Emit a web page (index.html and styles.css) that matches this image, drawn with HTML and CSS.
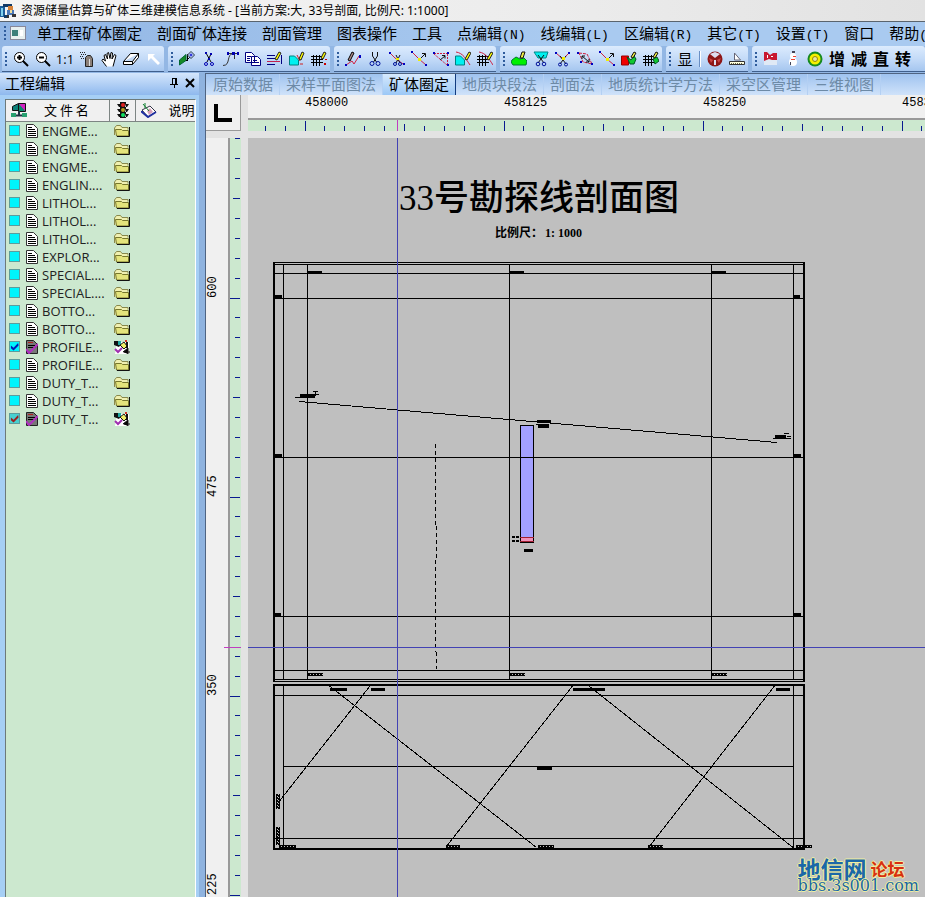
FILE: index.html
```html
<!DOCTYPE html>
<html lang="zh-CN">
<head>
<meta charset="utf-8">
<title>资源储量估算与矿体三维建模信息系统</title>
<link rel="stylesheet" href="styles.css">
</head>
<body>
<svg class="defs" aria-hidden="true">
  <defs>
    <symbol id="app" viewBox="0 0 16 16"><path fill="#1c5f9c" d="M0 3h5v11H0z"/><path fill="#7fd0ee" d="M1 5h2v8H1z"/><path fill="#123a66" d="M3 1h9v3H3zM4 12h3v3H4z"/><path fill="#d8843a" d="M8 3h5v4H8z"/><path fill="#4a78b8" d="M7 7h7v5H7z"/><path fill="#333" d="M7 12h2v3H7zM12 11h4v3h-4z"/><path fill="#eedd99" d="M10 7h2v3h-2z"/></symbol>
    <symbol id="zoomin" viewBox="0 0 16 16"><circle cx="6.500" cy="6.500" r="5" fill="#fff" stroke="#000"/><path d="M4 6.500h5M6.500 4v5" stroke="#000" stroke-width="2"/><path d="M10 10l5 5" stroke="#000" stroke-width="2"/></symbol>
    <symbol id="zoomout" viewBox="0 0 16 16"><circle cx="6.500" cy="6.500" r="5" fill="#fff" stroke="#000"/><path d="M4 6.500h5" stroke="#000" stroke-width="2"/><path d="M10 10l5 5" stroke="#000" stroke-width="2"/></symbol>
    <symbol id="spray" viewBox="0 0 16 16"><path fill="#8a7f78" stroke="#222" d="M6.500 6.500l2-2h3l2 3v8h-7z"/><path stroke="#222" stroke-dasharray="1 1" d="M1 1.500h6M2 3.500h5M1 5.500h4M2 7.500h3"/><path stroke="#ddd" d="M10.500 8v7"/></symbol>
    <symbol id="hand" viewBox="0 0 16 16"><path fill="#fff" stroke="#000" d="M5.500 15.500L1 9.500l1-1.500 2.500 2L3 4.500 4.500 3.500 6.500 8 6 2.500 7.500 1.500 9 7.500l1-6 1.500.5L11 8l2.500-4.500 1.500 1-3 11"/></symbol>
    <symbol id="eraser" viewBox="0 0 16 16"><path fill="#fff" stroke="#000" d="M.500 10.500l7-8h8l-6 8zM.500 10.500v3h9l6-7v-4M9.500 10.500v3"/></symbol>
    <symbol id="cursor" viewBox="0 0 16 16"><path fill="#fff" d="M3 3h7L8 5l7 7-2 2-7-7-3 3z"/></symbol>
    <symbol id="greenpen" viewBox="0 0 16 16"><path fill="#168a26" stroke="#063" d="M.500 14V9L7 3.500v6z"/><path stroke="#000" d="M7 10l4-4M8.500 3v7"/><path fill="#cfe6ff" stroke="#234" d="M12 .500l3.500 3.500L12 7.500 8.500 4z"/><path stroke="#00c" d="M10.500 4h3M12 2.500v3"/></symbol>
    <symbol id="cutnode" viewBox="0 0 16 16"><path stroke="#000" fill="none" d="M5 2l5 9M10 3L6 11"/><path fill="#0000b0" d="M4 1h2v2H4zM9 2h2v2H9zM7 7h2v2H7z"/><g fill="none" stroke="#0000b0"><circle cx="5" cy="13" r="1.500"/><circle cx="11" cy="13" r="1.500"/></g></symbol>
    <symbol id="nodes" viewBox="0 0 16 16"><path fill="none" stroke="#333" d="M0 14.500c8 0 3-11 10-12M4 2.500h11M11.500 3v5"/><path fill="#0000b0" d="M4 1h2v3H4zM14 1h2v3h-2zM9 1h3v3H9z"/></symbol>
    <symbol id="copy" viewBox="0 0 16 16"><path fill="#fff" stroke="#000080" d="M.500 1.500h6l3 3v7h-9zM6.500 5.500h6l3 3v6h-9z"/><path stroke="#000080" d="M2 5.500h4M2 7.500h3M2 9.500h3M8 9.500h4M8 11.500h6"/></symbol>
    <symbol id="textedit" viewBox="0 0 16 16"><path stroke="#000080" d="M0 4.500h8M0 7.500h8"/><path stroke="#c02050" d="M0 10.500h13"/><path stroke="#000080" d="M0 13.500h8"/><path fill="#ff0" stroke="#222" d="M8 8l4-7 2 1-4 7z"/><path stroke="#000080" d="M14.500 4v9"/></symbol>
    <symbol id="cyanpen" viewBox="0 0 16 16"><path fill="#00f0f0" stroke="#008080" d="M.500 14V5h5l4 4v5z"/><path stroke="#d02020" d="M8 4l3 6M11 13h3"/><path fill="#ff0" stroke="#222" d="M10 8l3-7 2 1-3 7z"/></symbol>
    <symbol id="grid" viewBox="0 0 16 16"><path stroke="#000" d="M0 5.500h12M0 8.500h12M0 11.500h12M2.500 4v11M5.500 4v11M8.500 4v11"/><path fill="#ff0" stroke="#222" d="M10 7l3-6 2 1-3 6z"/><path fill="#c00" d="M13 12h2v2h-2zM14 8h2v1h-2z"/></symbol>
    <symbol id="drawcurve" viewBox="0 0 16 16"><path fill="none" stroke="#d02040" d="M1 14l6-4 2 3 5-8"/><path fill="#a88" stroke="#000" d="M3 9L7 1l2 1-4 8z"/><path fill="#0000c0" d="M0 13h2v2H0zM14 4h2v3h-2z"/></symbol>
    <symbol id="scissors" viewBox="0 0 16 16"><path stroke="#111" d="M5.500 1v4l4 6M10.500 1v4l-4 6" fill="none"/><g fill="none" stroke="#00109a"><circle cx="5" cy="12.500" r="2"/><circle cx="11" cy="12.500" r="2"/></g></symbol>
    <symbol id="cutline" viewBox="0 0 16 16"><path fill="none" stroke="#d02040" d="M1 2l5 5 8 6"/><path fill="none" stroke="#111" d="M7 4l4 8M11 4l-4 8"/><path fill="#ee0" d="M7 7h3v2H7z"/><g fill="none" stroke="#00109a"><circle cx="6" cy="13" r="1.500"/><circle cx="11" cy="13" r="1.500"/></g><path fill="#0000c0" d="M0 1h2v2H0zM14 12h2v2h-2z"/></symbol>
    <symbol id="moveline" viewBox="0 0 16 16"><path fill="none" stroke="#d02040" d="M1 1l7 7 7 6"/><path stroke="#111" fill="none" d="M9 8l5-5M11 2.500h3.500V6"/><path fill="#ee0" d="M7 7h3v3H7z"/><path fill="#0000c0" d="M0 0h2v2H0zM14 13h2v2h-2z"/></symbol>
    <symbol id="dashline" viewBox="0 0 16 16"><path fill="none" stroke="#d02040" stroke-dasharray="2 1" d="M1 2.500h13M14.500 3v11M1 3l13 11"/><path stroke="#111" fill="none" d="M7 9l5-4M9 4.500h3v3"/><path fill="#0000c0" d="M0 1h2v2H0zM14 1h2v2h-2zM14 13h2v2h-2z"/></symbol>
    <symbol id="cyanred" viewBox="0 0 16 16"><path fill="#00f0f0" stroke="#008080" d="M.500 14V5h5l4 4v5z"/><path fill="none" stroke="#d02040" d="M1 1c7 1 10 7 14 13"/><path fill="#ff0" stroke="#222" d="M10 8l4-7 2 1-4 7z"/></symbol>
    <symbol id="gridred" viewBox="0 0 16 16"><path stroke="#000" d="M0 5.500h12M0 8.500h12M0 11.500h12M2.500 4v11M5.500 4v11M8.500 4v11"/><path fill="none" stroke="#d02040" d="M2 1c7 1 10 7 14 13"/><path fill="#ff0" stroke="#222" d="M10 8l4-7 2 1-4 7z"/></symbol>
    <symbol id="blob" viewBox="0 0 16 16"><path fill="#00f000" stroke="#073" d="M2 14l-2-3 1-2 4-3 4 2 4-1 3 3-1 4z"/><path fill="#ee4" stroke="#111" d="M9 7l2-6h3l-2 6z"/></symbol>
    <symbol id="cyancut" viewBox="0 0 16 16"><path fill="#00f0f0" stroke="#088" d="M1 1h14l-2 6H5z"/><path fill="none" stroke="#111" d="M5 4l6 8M11 4l-6 8"/><g fill="none" stroke="#00109a"><circle cx="5" cy="13" r="1.800"/><circle cx="11" cy="13" r="1.800"/></g></symbol>
    <symbol id="joincut" viewBox="0 0 16 16"><path fill="none" stroke="#d02040" d="M1 2l7 6 6-6"/><path fill="none" stroke="#111" d="M5 5l6 8M11 5l-6 8"/><path fill="#ee0" d="M7 6h3v3H7z"/><g fill="none" stroke="#00109a"><circle cx="5" cy="13.500" r="1.500"/><circle cx="11" cy="13.500" r="1.500"/></g><path fill="#0000c0" d="M0 1h2v2H0zM13 1h2v2h-2z"/></symbol>
    <symbol id="area" viewBox="0 0 16 16"><path fill="none" stroke="#d02040" stroke-dasharray="3 1" d="M2 2l8 1 5 10-9-2z"/><path fill="none" stroke="#111" d="M5 5l7 6M5 8V5h3M12 8v3H9"/><path fill="#0000c0" d="M0 1h2v2H0zM14 12h2v2h-2zM3 10h2v2H3z"/></symbol>
    <symbol id="redgreen" viewBox="0 0 16 16"><path fill="#f00000" stroke="#900" d="M.500 14V5h7v9z"/><path fill="#10c830" stroke="#052" d="M6 6l4 3 3-4 2 3-2 5H9z"/><path fill="#ee4" stroke="#111" d="M10 6l3-5 2 1-3 5z"/></symbol>
    <symbol id="gridgreen" viewBox="0 0 16 16"><path stroke="#000" d="M0 5.500h12M0 8.500h12M0 11.500h12M2.500 4v11M5.500 4v11M8.500 4v11"/><path fill="#10c830" stroke="#052" d="M10 8l4-2 2 4-4 3z"/><path fill="#ee4" stroke="#111" d="M10 6l3-5 2 1-3 5z"/></symbol>
    <symbol id="globe" viewBox="0 0 16 16"><circle cx="8" cy="8" r="7.500" fill="#8d1616"/><path fill="#dde" d="M3 3l5 4 5-4-5-2zM7 9h2v5H7z"/><path fill="#c44" d="M2 7l4 2-2 3zM14 7l-4 2 2 3z"/></symbol>
    <symbol id="setsquare" viewBox="0 0 16 16"><path fill="#fff" stroke="#667" d="M5.500 9V2l6 7z"/><path fill="#ffd" stroke="#333" d="M.500 10.500h15v3H.500z"/><path stroke="#664" d="M2 12.500h12" stroke-dasharray="1 1"/></symbol>
    <symbol id="flag" viewBox="0 0 16 16"><path fill="#dfe9f5" d="M1 8h13v6H1z"/><path fill="#c81830" d="M1 1h3l3 3 3-2h4v7H9L6 8 1 10z"/><path fill="#fff" d="M4 4h1v3H4zM8 5h2v1H8z"/></symbol>
    <symbol id="snowman" viewBox="0 0 16 16"><circle cx="8" cy="11" r="4" fill="#fff"/><circle cx="8" cy="5" r="3" fill="#fff"/><path fill="#445" d="M7 0h3v2H7zM5 11h1v3H5z"/><path fill="#e43" d="M8 5h3v1H8zM6 8h4v1H6z"/></symbol>
    <symbol id="target" viewBox="0 0 16 16"><circle cx="8" cy="8" r="7.500" fill="#158a20"/><circle cx="8" cy="8" r="5.500" fill="#f4f000"/><circle cx="8" cy="8" r="2.500" fill="#e8e8a0" stroke="#998a00"/></symbol>
    <symbol id="doc" viewBox="0 0 12 14"><path fill="#fff" stroke="#333" d="M.500.500h7l4 4v9H.500z"/><path stroke="#000" d="M2 3.500h4M2 5.500h7M2 7.500h8M2 9.500h8M2 11.500h8"/></symbol>
    <symbol id="docon" viewBox="0 0 12 14"><path fill="#777" stroke="#222" d="M.500.500h7l4 4v9H.500z"/><path stroke="#000" d="M2 5.500h7M2 7.500h8"/><path stroke="#b02020" d="M2 2.500h5"/><path fill="none" stroke="#b030c0" stroke-width="2" d="M0 9l3 4 9-9"/></symbol>
    <symbol id="folder" viewBox="0 0 16 14"><path fill="#f0f0b0" stroke="#88884c" d="M.500 11V4l2-2.500h4l1.500 2h6v2"/><path fill="#e4e47c" stroke="#77772c" d="M1.500 5.500h6l1 1h6v5.500h-12z"/><path fill="none" stroke="#111" d="M3 12.500h12.500V3"/></symbol>
    <symbol id="paint" viewBox="0 0 16 14"><path fill="#fff" d="M3 2h12v12H1z"/><path fill="#111" d="M0 1h4l3 3-2 3-5-2zM12 2h2v6h-2z"/><path fill="#20a8a0" d="M4 1h3v4H4z"/><path fill="#ee6" stroke="#111" d="M6 5l4-3 3 4-3 3z"/><path fill="none" stroke="#a030b0" stroke-width="2" d="M1 9l3 3 4-4"/><path stroke="#111" d="M9 12l5-4v6M10 12h6"/><path fill="#d03020" d="M11 0h2v2h-2z"/></symbol>
    <symbol id="tree" viewBox="0 0 16 16"><path fill="#0a7f78" stroke="#111" d="M1.500 4.500l6-3v7h-6z"/><path fill="#d020c0" stroke="#111" d="M7.500 1.500h7v8h-7z"/><path fill="#0a8a6a" d="M8 2l6 7H8z"/><path stroke="#234" d="M8 9v5M3 13.500h10" stroke-width="2"/><path fill="#28a070" d="M0 11h5v4H0zM11 11h5v4h-5z"/></symbol>
    <symbol id="light" viewBox="0 0 14 16"><path fill="#111" d="M4 0h6v16H4zM1 2h3l1 3H3zM1 7h3l1 3H3zM1 12h3l1 3H3zM13 2h-3L9 5h2zM13 7h-3l-1 3h2zM13 12h-3l-1 3h2z"/><circle cx="7" cy="3" r="2" fill="#e02020"/><circle cx="7" cy="8" r="2" fill="#b8a020"/><circle cx="7" cy="13" r="2" fill="#10e060"/></symbol>
    <symbol id="note" viewBox="0 0 16 16"><path fill="#fff" stroke="#334" d="M1 8l8-4 6 6-8 5z"/><path fill="#d8a0b8" d="M6 9l3-3 3 4-4 3z"/><path fill="none" stroke="#2030a0" stroke-width="2" d="M1 9v1l6 5 8-5"/><path fill="none" stroke="#108030" d="M2 2l6 7M4 1v5"/></symbol>
  </defs>
</svg>

<header class="titlebar"><svg class="i16"><use href="#app"/></svg><h1>资源储量估算与矿体三维建模信息系统 - [当前方案:大, 33号剖面, 比例尺: 1:1000]</h1></header>

<nav class="menubar" aria-label="主菜单">
  <span class="grip"></span>
  <svg class="docwin" viewBox="0 0 16 14"><rect x=".5" y=".5" width="15" height="13" fill="#e8f0f0" stroke="#889"/><rect x="2" y="4" width="6" height="6" fill="#3d7f7a"/><rect x="10" y="4" width="3" height="6" fill="#fff"/></svg>
  <button>单工程矿体圈定</button><button>剖面矿体连接</button><button>剖面管理</button><button>图表操作</button><button>工具</button><button>点编辑<span class="key">(N)</span></button><button>线编辑<span class="key">(L)</span></button><button>区编辑<span class="key">(R)</span></button><button>其它<span class="key">(T)</span></button><button>设置<span class="key">(T)</span></button><button>窗口</button><button>帮助<span class="key">(H)</span></button>
</nav>

<div class="toolbars">
  <div class="tools"><span class="grip"></span>
    <button aria-label="放大"><svg class="i16"><use href="#zoomin"/></svg></button><button aria-label="缩小"><svg class="i16"><use href="#zoomout"/></svg></button><button class="ratio">1:1</button><button aria-label="喷涂"><svg class="i16"><use href="#spray"/></svg></button><button aria-label="平移"><svg class="i16"><use href="#hand"/></svg></button><button aria-label="清除"><svg class="i16"><use href="#eraser"/></svg></button><button aria-label="选择"><svg class="i16"><use href="#cursor"/></svg></button>
  </div>
  <div class="tools"><span class="grip"></span>
    <button aria-label="加点"><svg class="i16"><use href="#greenpen"/></svg></button><button aria-label="剪点"><svg class="i16"><use href="#cutnode"/></svg></button><button aria-label="节点"><svg class="i16"><use href="#nodes"/></svg></button><button aria-label="复制"><svg class="i16"><use href="#copy"/></svg></button><button aria-label="改文字"><svg class="i16"><use href="#textedit"/></svg></button><button aria-label="改点参数"><svg class="i16"><use href="#cyanpen"/></svg></button><button aria-label="改点属性"><svg class="i16"><use href="#grid"/></svg></button>
  </div>
  <div class="tools"><span class="grip"></span>
    <button aria-label="画线"><svg class="i16"><use href="#drawcurve"/></svg></button><button aria-label="剪切"><svg class="i16"><use href="#scissors"/></svg></button><button aria-label="剪断线"><svg class="i16"><use href="#cutline"/></svg></button><button aria-label="移线点"><svg class="i16"><use href="#moveline"/></svg></button><button aria-label="移线"><svg class="i16"><use href="#dashline"/></svg></button><button aria-label="改线参数"><svg class="i16"><use href="#cyanred"/></svg></button><button aria-label="改线属性"><svg class="i16"><use href="#gridred"/></svg></button>
  </div>
  <div class="tools"><span class="grip"></span>
    <button aria-label="造区"><svg class="i16"><use href="#blob"/></svg></button><button aria-label="剪区"><svg class="i16"><use href="#cyancut"/></svg></button><button aria-label="剪弧"><svg class="i16"><use href="#joincut"/></svg></button><button aria-label="移区"><svg class="i16"><use href="#area"/></svg></button><button aria-label="移弧点"><svg class="i16"><use href="#moveline"/></svg></button><button aria-label="改区参数"><svg class="i16"><use href="#redgreen"/></svg></button><button aria-label="改区属性"><svg class="i16"><use href="#gridgreen"/></svg></button>
  </div>
  <div class="tools"><span class="grip"></span>
    <button class="word">显</button><span class="sep"></span><button aria-label="三维"><svg class="i16"><use href="#globe"/></svg></button><button aria-label="量算"><svg class="i16"><use href="#setsquare"/></svg></button>
  </div>
  <div class="tools last"><span class="grip"></span>
    <button aria-label="标记"><svg class="i16"><use href="#flag"/></svg></button><button aria-label="雪人"><svg class="i16"><use href="#snowman"/></svg></button><button aria-label="定位"><svg class="i16"><use href="#target"/></svg></button><button class="word strong">增</button><button class="word strong">减</button><button class="word strong">直</button><button class="word strong">转</button>
  </div>
</div>

<main class="work">
  <aside class="side">
    <div class="sidehead"><h2>工程编辑</h2>
      <button aria-label="固定"><svg class="i10" viewBox="0 0 10 10"><path d="M3 .500h5M3.500 0v6M6.500 0v6M7.500 0v6M1 6.500h8M5.500 6v4" stroke="#000" fill="none"/></svg></button>
      <button aria-label="关闭"><svg class="i10" viewBox="0 0 10 10"><path d="M1 1l8 8M9 1L1 9" stroke="#000" stroke-width="2"/></svg></button>
    </div>
    <div class="list">
      <table>
        <colgroup><col class="c-name"><col class="c-state"><col></colgroup>
        <thead><tr>
          <th><div class="cell"><svg class="i16"><use href="#tree"/></svg><span class="thname">文 件 名</span></div></th>
          <th><div class="cell"><svg class="i16"><use href="#light"/></svg></div></th>
          <th><div class="cell"><svg class="i16"><use href="#note"/></svg><span class="thdesc">说明</span></div></th>
        </tr></thead>
        <tbody>
          <tr><td><label><input type="checkbox"><svg class="doc"><use href="#doc"/></svg>ENGME...</label></td><td><svg class="folder"><use href="#folder"/></svg></td><td></td></tr>
          <tr><td><label><input type="checkbox"><svg class="doc"><use href="#doc"/></svg>ENGME...</label></td><td><svg class="folder"><use href="#folder"/></svg></td><td></td></tr>
          <tr><td><label><input type="checkbox"><svg class="doc"><use href="#doc"/></svg>ENGME...</label></td><td><svg class="folder"><use href="#folder"/></svg></td><td></td></tr>
          <tr><td><label><input type="checkbox"><svg class="doc"><use href="#doc"/></svg>ENGLIN....</label></td><td><svg class="folder"><use href="#folder"/></svg></td><td></td></tr>
          <tr><td><label><input type="checkbox"><svg class="doc"><use href="#doc"/></svg>LITHOL...</label></td><td><svg class="folder"><use href="#folder"/></svg></td><td></td></tr>
          <tr><td><label><input type="checkbox"><svg class="doc"><use href="#doc"/></svg>LITHOL...</label></td><td><svg class="folder"><use href="#folder"/></svg></td><td></td></tr>
          <tr><td><label><input type="checkbox"><svg class="doc"><use href="#doc"/></svg>LITHOL...</label></td><td><svg class="folder"><use href="#folder"/></svg></td><td></td></tr>
          <tr><td><label><input type="checkbox"><svg class="doc"><use href="#doc"/></svg>EXPLOR...</label></td><td><svg class="folder"><use href="#folder"/></svg></td><td></td></tr>
          <tr><td><label><input type="checkbox"><svg class="doc"><use href="#doc"/></svg>SPECIAL....</label></td><td><svg class="folder"><use href="#folder"/></svg></td><td></td></tr>
          <tr><td><label><input type="checkbox"><svg class="doc"><use href="#doc"/></svg>SPECIAL....</label></td><td><svg class="folder"><use href="#folder"/></svg></td><td></td></tr>
          <tr><td><label><input type="checkbox"><svg class="doc"><use href="#doc"/></svg>BOTTO...</label></td><td><svg class="folder"><use href="#folder"/></svg></td><td></td></tr>
          <tr><td><label><input type="checkbox"><svg class="doc"><use href="#doc"/></svg>BOTTO...</label></td><td><svg class="folder"><use href="#folder"/></svg></td><td></td></tr>
          <tr><td><label><input type="checkbox" checked><svg class="doc"><use href="#docon"/></svg>PROFILE...</label></td><td><svg class="folder"><use href="#paint"/></svg></td><td></td></tr>
          <tr><td><label><input type="checkbox"><svg class="doc"><use href="#doc"/></svg>PROFILE...</label></td><td><svg class="folder"><use href="#folder"/></svg></td><td></td></tr>
          <tr><td><label><input type="checkbox"><svg class="doc"><use href="#doc"/></svg>DUTY_T...</label></td><td><svg class="folder"><use href="#folder"/></svg></td><td></td></tr>
          <tr><td><label><input type="checkbox"><svg class="doc"><use href="#doc"/></svg>DUTY_T...</label></td><td><svg class="folder"><use href="#folder"/></svg></td><td></td></tr>
          <tr><td><label><input type="checkbox" class="active" checked><svg class="doc"><use href="#docon"/></svg>DUTY_T...</label></td><td><svg class="folder"><use href="#paint"/></svg></td><td></td></tr>
        </tbody>
      </table>
    </div>
  </aside>

  <section class="view">
    <div class="tabs" role="tablist">
      <button role="tab">原始数据</button><button role="tab">采样平面图法</button><button role="tab" class="on" aria-selected="true">矿体圈定</button><button role="tab">地质块段法</button><button role="tab">剖面法</button><button role="tab">地质统计学方法</button><button role="tab">采空区管理</button><button role="tab">三维视图</button>
    </div>
    <div class="sheet">
      <div class="corner"><svg viewBox="0 0 34 36"><path fill="none" stroke="#000" stroke-width="4" d="M10 9v16h16"/></svg></div>
      <svg class="hruler" id="hruler"></svg>
      <svg class="vruler" id="vruler"></svg>
      <div class="canvas">
        <svg class="drawing">
          <g transform="translate(-248 -138)">
            <text class="dtitle" x="399" y="210">33号勘探线剖面图</text>
            <text class="dscale" x="495" y="237">比例尺：<tspan x="545">1:</tspan><tspan x="558">1000</tspan></text>
            <path class="fill-hole" d="M520 425h14v112h-14z"/>
            <path class="fill-ore" d="M520 537h14v6h-14z"/>
            <g class="thin">
              <path d="M273 262.500h532M273 264.500h532M273 273.500h532M273 298.500h532M273 457.500h532M273 616.500h532M273 670.500h532M273 679.500h532M273 681.500h532"/>
              <path d="M273 695.500h532M283 766.500h511M273 838.500h532"/>
              <path d="M283.500 264v416M307.500 264v416M509.500 264v416M711.500 264v416M793.500 264v416M283.500 685v164M793.500 685v164"/>
              <path d="M299 401.500L777 442.500M520.500 425.500h13v117h-13z"/>
              <path d="M329.500 686L536.500 847.500M370 686L279.500 801M572.500 686L447.500 845M589 686L793 847.500M774.500 686L650.500 845"/>
              <path stroke-dasharray="4 3" d="M435.500 444v82M436.500 526v34M435.500 560v92M436.500 652v17"/>
            </g>
            <path class="thick" d="M274 262v420M804 262v420M273 685h531v164H274V685"/>
            <path class="ore-line" d="M520 537.500h14M520 541.500h14"/>
            <path class="mark" d="M308 271h14v3h-14zM510 271h14v3h-14zM712 271h14v3h-14zM275 295h7v3h-7zM275 454h7v3h-7zM275 613h6v3h-6zM794 295h6v3h-6zM794 454h7v3h-7zM794 613h7v3h-7zM330 688h17v3h-17zM371 688h14v3h-14zM573 688h32v3h-32zM776 688h14v3h-14zM537 767h15v3h-15zM300 394h15v3h-15zM537 420h14v3h-14zM538 424h11v4h-11zM775 435h11v3h-11zM524 549h9v3h-9z"/>
            <g class="thin">
              <path d="M295 397.500h20M313 391.500h5M314 394.500h5M315.500 392v4M536 424.500h4M773 438.500h18M784 433.500h5M787 436.500h4"/>
              <path stroke-dasharray="3 1" d="M512 536.500h8M512 537.500h8M512 540.500h8M512 541.500h8"/>
              <path d="M308 673.500h15M308 675.500h15M510 673.500h15M510 675.500h15M712 673.500h15M712 675.500h15M279 845.500h17M279 847.500h17M446 845.500h14M446 847.500h14M538 845.500h16M538 847.500h16M648 845.500h15M648 847.500h15M796 845.500h16M796 847.500h16M276.500 794v15M279.500 794v15M276.500 827v18M279.500 827v18"/>
              <path stroke-dasharray="2 1" d="M308 674.500h15M510 674.500h15M712 674.500h15M279 846.500h17M446 846.500h14M538 846.500h16M648 846.500h15M796 846.500h16M277.500 794v15M278.500 795v14M277.500 827v18M278.500 828v17"/>
            </g>
            <path class="cross" d="M397.500 138v2000M248 647.500h3000"/>
          </g>
        </svg>
        <div class="stamp"><div class="names"><span class="site">地信网</span><span class="forum">论坛</span></div><div class="url">bbs.3s001.com</div></div>
      </div>
    </div>
  </section>
</main>
<script src="rulers.js"></script>
</body>
</html>
```
FILE: rulers.js
```js
const NS = 'http://www.w3.org/2000/svg';
const STEP = 19.9;

function add(parent, name, attrs, text) {
  const node = document.createElementNS(NS, name);
  for (const key in attrs) node.setAttribute(key, attrs[key]);
  if (text) node.textContent = text;
  parent.appendChild(node);
}

// Every tenth tick is long, every fifth is medium.
function ticks(origin, first, count, draw) {
  let d = '';
  for (let k = first; k < count; k++) {
    const pos = Math.floor(origin + k * STEP) + 0.5;
    const len = k % 10 === 0 ? 10 : k % 5 === 0 ? 7 : 5;
    d += draw(pos, len);
  }
  return d;
}

const h = document.getElementById('hruler');
add(h, 'path', { class: 'tick', d: ticks(57, -2, 120, (p, n) => `M${p} ${36 - n}v${n}`) });
add(h, 'path', { class: 'pos', d: 'M149.5 25v11' });
for (let i = 0; i < 12; i++) {
  add(h, 'text', { x: 57 + i * 199, y: 11 }, String(458000 + i * 125));
}

const v = document.getElementById('vruler');
add(v, 'path', { class: 'tick', d: ticks(160, -8, 90, (p, n) => `M${34 - n} ${p}h${n}`) });
add(v, 'path', { class: 'pos', d: 'M18 509.5h17' });
for (let i = 0; i < 5; i++) {
  const y = 160 + i * 199;
  add(v, 'text', { x: 10, y: y, transform: `rotate(-90 10 ${y})` }, String(600 - i * 125));
}
```
FILE: styles.css
```css
* { box-sizing: border-box; }

body {
  margin: 0;
  height: 100vh;
  display: flex;
  flex-direction: column;
  overflow: hidden;
  background: #94b8e4;
  color: #000;
  font: 15px/20px "Open Sans", "Noto Sans CJK SC", sans-serif;
}

button {
  margin: 0;
  padding: 0;
  border: 0;
  background: none;
  color: inherit;
  font: inherit;
  white-space: nowrap;
}

svg { display: block; flex: none; }
.defs { position: absolute; width: 0; height: 0; }
.i16 { width: 16px; height: 16px; }
.i10 { width: 10px; height: 10px; }

.titlebar {
  flex: none;
  display: flex;
  align-items: center;
  gap: 5px;
  height: 22px;
  border-bottom: 1px solid #5a646e;
  background: linear-gradient(90deg, #f4f4f4, #ececec 60%, #e2e2e2);
}
.titlebar h1 {
  margin: 0;
  font: 12px/20px "Noto Sans", "Noto Sans CJK SC", sans-serif;
  white-space: nowrap;
}

.menubar {
  flex: none;
  display: flex;
  align-items: center;
  gap: 15px;
  height: 24px;
  padding: 0 0 2px 4px;
  overflow: hidden;
  background: linear-gradient(90deg, #92b6e4, #a9caf0 60%);
  font-family: "Noto Sans CJK SC", sans-serif;
}
.menubar .grip { margin-right: -11px; }
.docwin { width: 16px; height: 14px; margin-right: -4px; }
.key { font: 13px "Liberation Mono", monospace; }

.grip {
  flex: none;
  width: 2px;
  height: 14px;
  background: repeating-linear-gradient(#2f5c9c 0 2px, transparent 2px 4px);
}

.toolbars {
  flex: none;
  display: flex;
  gap: 4px;
  height: 27px;
  padding-left: 2px;
  overflow: hidden;
  border-bottom: 1px solid #93b7e4;
  background: #93b7e4;
}
.tools {
  flex: none;
  display: flex;
  align-items: center;
  padding-left: 3px;
  border-bottom: 1px solid #3f5f8c;
  border-radius: 3px 3px 0 0;
  background: linear-gradient(#dcebfd, #c4dbf8 50%, #a5c6ef);
}
.tools .grip { margin-right: 3px; }
.tools button {
  width: 22px;
  height: 22px;
  display: flex;
  align-items: center;
  justify-content: center;
}
.tools .ratio { font-size: 13px; }
.tools .word { font-size: 15px; }
.tools .strong { font-size: 16px; font-weight: 700; }
.tools.last { flex: 1 0 auto; }
.sep { width: 1px; height: 16px; margin: 0 4px 0 3px; background: #6a8fc4; box-shadow: 1px 0 #fff; }

.work { flex: 1; display: flex; min-height: 0; }

.side {
  flex: none;
  width: 205px;
  display: flex;
  flex-direction: column;
  padding: 0 9px 0 5px;
  background: linear-gradient(90deg, #a6cff5 199px, #8fb3df 199px);
}
.sidehead {
  flex: none;
  display: flex;
  align-items: center;
  gap: 6px;
  height: 22px;
  margin: 0 -3px 4px -5px;
  padding: 0 4px 3px 5px;
  background: linear-gradient(#d4e6fc, #8fb9ee);
}
.sidehead h2 {
  flex: 1;
  margin: 0;
  font: 15px/18px "Noto Sans CJK SC", sans-serif;
}

.list {
  flex: 1;
  min-height: 0;
  border: solid #6d7a7a;
  border-width: 1px 0 0 1px;
  border-right: 1px solid #fff;
  background: #cce8cf;
  overflow: hidden;
}
table { width: 100%; table-layout: fixed; border-collapse: collapse; }
.c-name { width: 103px; }
.c-state { width: 26px; }
th {
  height: 21px;
  padding: 0;
  border-right: 1px solid #7d8583;
  border-bottom: 1px solid #7d8583;
  background: #f0f0f0;
  font: 13px/18px "Noto Sans CJK SC", sans-serif;
}
th:last-child { border-right: 0; }
.cell { display: flex; align-items: center; padding-left: 5px; overflow: hidden; white-space: nowrap; }
.thname { margin-left: 17px; }
.thdesc { margin-left: 12px; }
td { height: 18px; padding: 0; }
td + td { padding-left: 5px; }
label {
  display: flex;
  align-items: center;
  padding-left: 3px;
  font-size: 13px;
  line-height: 18px;
  color: #222;
  white-space: nowrap;
}
input {
  appearance: none;
  flex: none;
  width: 11px;
  height: 11px;
  margin: 0 6px 0 0;
  border: 1px solid #5c9c9c;
  background: #00f4fc;
}
input:checked::before {
  content: "";
  display: block;
  height: 9px;
  background: #0018b8;
  clip-path: polygon(10% 40%, 40% 65%, 90% 10%, 95% 40%, 40% 95%, 10% 70%);
}
input.active { background: #48d0d0; }
input.active:checked::before { background: #9c2020; }
.doc { width: 12px; height: 14px; margin-right: 4px; }
.folder { width: 16px; height: 14px; }

.view {
  flex: 1;
  min-width: 0;
  display: flex;
  flex-direction: column;
  border: solid #4f6482;
  border-width: 1px 0 0 1px;
}
.tabs {
  flex: none;
  display: flex;
  height: 21px;
  overflow: hidden;
  padding-left: 1px;
  background: linear-gradient(#9fc3ef, #cfe2fa);
  color: #6d8aa6;
}
.tabs button {
  flex: none;
  padding: 0 6px 2px;
  border-right: 1px solid #b4d0f3;
  font: 15px/18px "Noto Sans CJK SC", sans-serif;
}
.tabs .on {
  border-right-color: #123c80;
  background: linear-gradient(#d6e9fd, #9cc8f6);
  color: #000;
}

.sheet {
  flex: 1;
  min-height: 0;
  display: grid;
  grid-template: 43px 1fr / 42px 1fr;
  background: #e3e3e3;
}
.corner {
  width: 35px;
  height: 36px;
  border: solid #999;
  border-width: 0 1px 1px 0;
  background: #f0f0f0;
}
.hruler {
  width: 100%;
  height: 43px;
  background: linear-gradient(#f0f0f0 23px, #999 23px 25px, #cce8cf 25px 36px, #e3e3e3 36px);
}
.vruler {
  width: 42px;
  height: 100%;
  background: linear-gradient(90deg, #f0f0f0 22px, #999 22px 24px, #cce8cf 24px 35px, #e3e3e3 35px);
}
.hruler text, .vruler text { font: 12px "Liberation Mono", monospace; }
.tick { stroke: #0a1a90; fill: none; shape-rendering: crispEdges; }
.pos { stroke: #c040c0; fill: none; shape-rendering: crispEdges; }

.canvas { position: relative; min-width: 0; min-height: 0; overflow: hidden; background: #bfbfbf; }
.drawing { width: 100%; height: 100%; shape-rendering: crispEdges; }
.dtitle { font: 500 35px "Liberation Serif", "Noto Sans CJK SC", serif; }
.dscale { font: 700 12px "Liberation Serif", "Noto Sans CJK SC", serif; }
.thin { fill: none; stroke: #000; }
.thick { fill: none; stroke: #000; stroke-width: 2; }
.mark { fill: #000; }
.fill-hole { fill: #a3a0ff; }
.fill-ore { fill: #f090b8; }
.ore-line { stroke: #a02030; }
.cross { fill: none; stroke: #4242b4; }

.stamp {
  position: absolute;
  right: 6px;
  bottom: 3px;
  color: #1b68a8;
  white-space: nowrap;
  text-shadow: 1px 0 #f0f0a0, -1px 0 #f0f0a0, 0 1px #f0f0a0, 0 -1px #f0f0a0;
}
.names { display: flex; align-items: center; gap: 4px; height: 17px; }
.site { font: 700 23px/17px "Noto Sans CJK SC", sans-serif; }
.forum { color: #d83010; font: 700 17px/17px "Noto Sans CJK SC", sans-serif; }
.url { font: 16px/17px "DejaVu Serif", serif; }
```
